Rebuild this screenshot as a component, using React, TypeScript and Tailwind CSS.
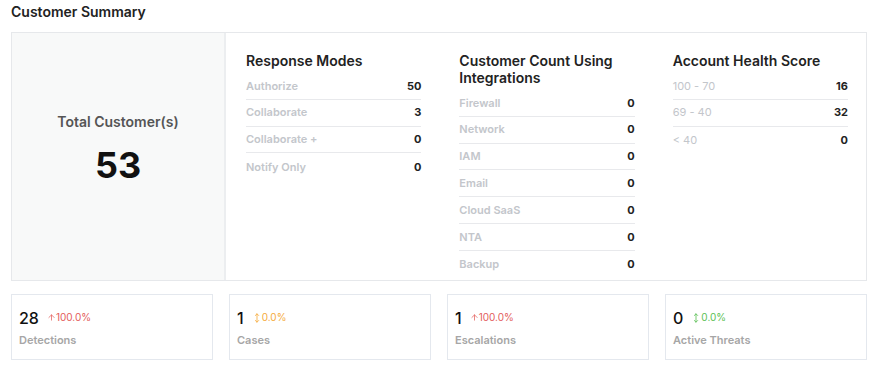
import React from "react";
import { ArrowUp, MoveVertical } from "lucide-react";

type Row = { label: string; value: number };

function Section({ title, rows, lightLabels = false }: { title: React.ReactNode; rows: Row[]; lightLabels?: boolean }) {
  return (
    <div className="flex flex-col">
      <div className="text-[14px] leading-[17px] font-semibold text-[#222]">{title}</div>
      <div className="mt-[4px] flex flex-col">
        {rows.map((r, i) => (
          <div
            key={r.label}
            className={
              "flex h-[26.8px] items-center justify-between " +
              (i < rows.length - 1 ? "border-b border-[#e8e9ec]" : "")
            }
          >
            <span className={"text-[11px] text-[#c3c6cb] " + (lightLabels ? "font-normal" : "font-semibold")}>
              {r.label}
            </span>
            <span className="text-[11px] font-bold text-[#222]">{r.value}</span>
          </div>
        ))}
      </div>
    </div>
  );
}

function StatCard({
  value,
  pct,
  color,
  up,
  label,
}: {
  value: number;
  pct: string;
  color: string;
  up: boolean;
  label: string;
}) {
  return (
    <div className="flex flex-col border border-[#e4e8ee] bg-white px-[7px] pt-[13px] pb-[12px]">
      <div className="flex h-[20px] items-center">
        <span className="text-[16px] font-medium text-[#111]">{value}</span>
        <span className={"ml-[8px] flex items-center text-[10px] " + color}>
          {up ? (
            <ArrowUp size={9} strokeWidth={2} />
          ) : (
            <MoveVertical size={10} strokeWidth={2} />
          )}
          <span>{pct}</span>
        </span>
      </div>
      <div className="mt-[5px] text-[11px] leading-[14px] font-semibold text-[#a6a6a6]">{label}</div>
    </div>
  );
}

export default function App() {
  return (
    <div className="w-[879px] h-[367px] bg-white px-[11px] pt-[3px]" style={{ fontFamily: "Inter, 'Noto Sans', sans-serif" }}>
      <div className="text-[14px] leading-[17px] font-semibold text-[#222]">Customer Summary</div>
      <div className="mt-[12px] flex w-[856px] border border-[#e6e8eb]">
        <div className="flex w-[214px] flex-col items-center border-r-2 border-[#eceef0] bg-[#f8f9f9] pt-[80px]">
          <div className="text-[14px] leading-[17px] font-semibold text-[#555]">Total Customer(s)</div>
          <div className="mt-[15px] text-[36px] leading-[40px] font-bold text-[#111]">53</div>
        </div>
        <div className="grid flex-1 grid-cols-3 gap-x-[38px] pl-[20px] pr-[18px] pt-[19px] pb-[2px]">
          <Section
            title="Response Modes"
            rows={[
              { label: "Authorize", value: 50 },
              { label: "Collaborate", value: 3 },
              { label: "Collaborate +", value: 0 },
              { label: "Notify Only", value: 0 },
            ]}
          />
          <Section
            title={
              <>
                Customer Count Using
                <br />
                Integrations
              </>
            }
            rows={[
              { label: "Firewall", value: 0 },
              { label: "Network", value: 0 },
              { label: "IAM", value: 0 },
              { label: "Email", value: 0 },
              { label: "Cloud SaaS", value: 0 },
              { label: "NTA", value: 0 },
              { label: "Backup", value: 0 },
            ]}
          />
          <Section
            title="Account Health Score"
            lightLabels
            rows={[
              { label: "100 - 70", value: 16 },
              { label: "69 - 40", value: 32 },
              { label: "< 40", value: 0 },
            ]}
          />
        </div>
      </div>
      <div className="mt-[13px] grid w-[856px] grid-cols-4 gap-4">
        <StatCard value={28} pct="100.0%" color="text-[#e35d5b]" up label="Detections" />
        <StatCard value={1} pct="0.0%" color="text-[#f5ab3c]" up={false} label="Cases" />
        <StatCard value={1} pct="100.0%" color="text-[#e35d5b]" up label="Escalations" />
        <StatCard value={0} pct="0.0%" color="text-[#5bbf55]" up={false} label="Active Threats" />
      </div>
    </div>
  );
}
